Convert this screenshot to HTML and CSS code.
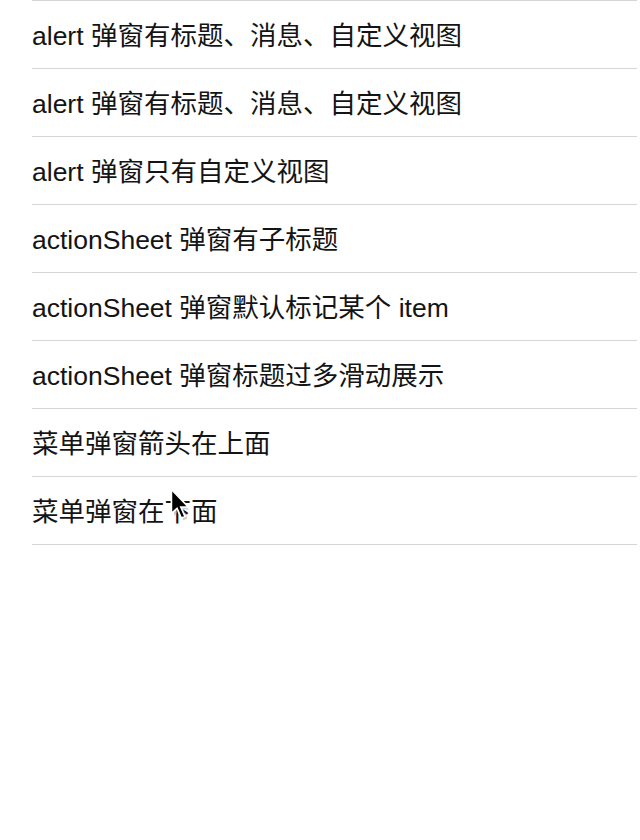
FILE: index.html
```html
<!DOCTYPE html>
<html lang="zh-CN">
<head>
<meta charset="utf-8">
<link rel="stylesheet" href="styles.css">
</head>
<body>
<ul class="list">
  <li class="row">alert 弹窗有标题、消息、自定义视图</li>
  <li class="row">alert 弹窗有标题、消息、自定义视图</li>
  <li class="row">alert 弹窗只有自定义视图</li>
  <li class="row">actionSheet 弹窗有子标题</li>
  <li class="row">actionSheet 弹窗默认标记某个 item</li>
  <li class="row">actionSheet 弹窗标题过多滑动展示</li>
  <li class="row">菜单弹窗箭头在上面</li>
  <li class="row">菜单弹窗在下面</li>
</ul>
<svg class="cursor" width="20" height="33" viewBox="0 0 12 20">
  <path d="M1.5 2.5 L2.5 17 L5.5 14 L8 19.5 L10.5 18.5 L8 13 L11.5 13 Z" fill="#999" opacity="0.5"/>
  <path d="M0.8 0.8 L0.8 15.5 L4.2 12.3 L6.8 18.2 L9 17.2 L6.5 11.5 L11 11.5 Z" fill="#000" stroke="#fff" stroke-width="1"/>
</svg>
</body>
</html>
```
FILE: styles.css
```css
html, body {
  margin: 0;
  padding: 0;
  background: #fff;
}
body {
  position: relative;
  width: 640px;
  height: 840px;
  overflow: hidden;
}
.list {
  list-style: none;
  margin: 0 3px 0 32px;
  padding: 0;
  border-bottom: 1px solid #d6d6d6;
}
.row {
  box-sizing: content-box;
  height: 64px;
  padding-bottom: 3px;
  border-top: 1px solid #d6d6d6;
  display: flex;
  align-items: center;
  font-family: "Liberation Sans", "Noto Sans CJK SC", sans-serif;
  font-size: 26.5px;
  color: #141414;
}
.cursor {
  position: absolute;
  left: 170px;
  top: 488px;
}
```
